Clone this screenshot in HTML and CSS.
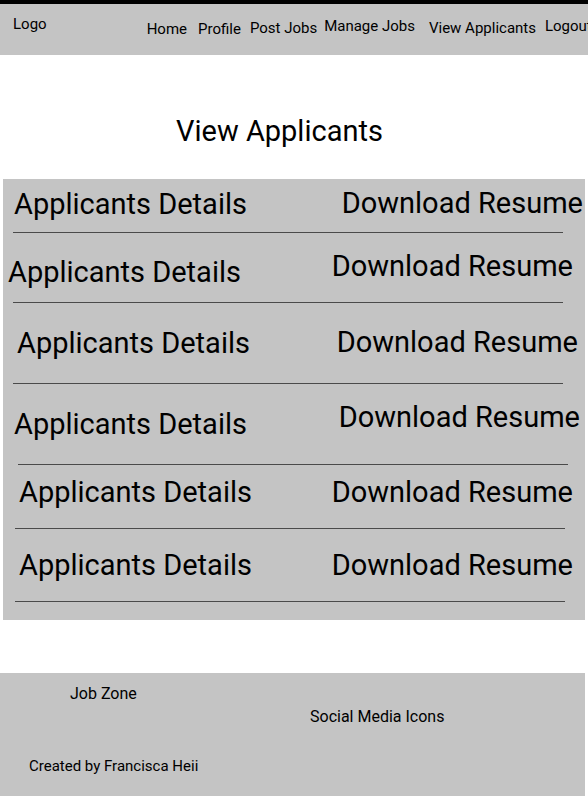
FILE: index.html
```html
<!DOCTYPE html>
<html>
<head>
<meta charset="utf-8">
<link rel="stylesheet" href="styles.css">
</head>
<body>
<header class="topbar">
  <div class="logo">Logo</div>
  <nav class="nav">
    <a class="nav-item n-home">Home</a>
    <a class="nav-item n-profile">Profile</a>
    <a class="nav-item n-post">Post Jobs</a>
    <a class="nav-item n-manage">Manage Jobs</a>
    <a class="nav-item n-view">View Applicants</a>
    <a class="nav-item n-logout">Logout</a>
  </nav>
</header>
<main>
  <h1 class="title">View Applicants</h1>
  <section class="panel">
    <div class="row r1"><span class="details">Applicants Details</span><span class="resume">Download Resume</span></div>
    <div class="line"></div>
    <div class="row r2"><span class="details">Applicants Details</span><span class="resume">Download Resume</span></div>
    <div class="line"></div>
    <div class="row r3"><span class="details">Applicants Details</span><span class="resume">Download Resume</span></div>
    <div class="line"></div>
    <div class="row r4"><span class="details">Applicants Details</span><span class="resume">Download Resume</span></div>
    <div class="line l4"></div>
    <div class="row r5"><span class="details">Applicants Details</span><span class="resume">Download Resume</span></div>
    <div class="line l5"></div>
    <div class="row r6"><span class="details">Applicants Details</span><span class="resume">Download Resume</span></div>
    <div class="line l5"></div>
  </section>
</main>
<footer class="footer">
  <div class="brand">Job Zone</div>
  <div class="social">Social Media Icons</div>
  <div class="credit">Created by Francisca Heii</div>
</footer>
</body>
</html>
```
FILE: styles.css
```css
html, body {
  margin: 0;
  padding: 0;
  background: #ffffff;
  font-family: Roboto, "Liberation Sans", sans-serif;
  color: #000;
  overflow: hidden;
  width: 588px;
}
.topbar {
  border-top: 4px solid #000;
  background: #c4c4c4;
  height: 51px;
  display: flex;
  align-items: flex-start;
  white-space: nowrap;
}
.logo {
  font-size: 15px;
  margin-left: 13px;
  margin-top: 11px;
}
.nav {
  display: flex;
  align-items: flex-start;
  margin-left: 100px;
  font-size: 15px;
}
.nav-item { display: block; }
.n-home { margin-top: 16px; }
.n-profile { margin-top: 16px; margin-left: 11px; }
.n-post { margin-top: 15px; margin-left: 9px; }
.n-manage { margin-top: 13px; margin-left: 7px; }
.n-view { margin-top: 15px; margin-left: 14px; }
.n-logout { margin-top: 13px; margin-left: 9px; }

.title {
  margin: 0;
  height: 124px;
  box-sizing: border-box;
  padding-top: 62px;
  padding-left: 176px;
  font-size: 29px;
  font-weight: 400;
  line-height: 1;
}
.panel {
  margin-left: 3px;
  width: 582px;
  background: #c4c4c4;
  padding-bottom: 18px;
}
.row {
  display: flex;
  justify-content: space-between;
  align-items: flex-start;
  font-size: 29px;
  line-height: 1;
  white-space: nowrap;
}
.line {
  height: 1px;
  background: #4a4a4a;
  margin-left: 10px;
  width: 550px;
}
.l4 { margin-left: 15px; }
.l5 { margin-left: 12px; }
.r1 { height: 53px; }
.r1 .details { margin: 11px 0 0 11px; }
.r1 .resume { margin: 10px 2px 0 0; }
.r2 { height: 69px; }
.r2 .details { margin: 25px 0 0 5px; }
.r2 .resume { margin: 19px 12px 0 0; }
.r3 { height: 80px; }
.r3 .details { margin: 26px 0 0 14px; }
.r3 .resume { margin: 25px 7px 0 0; }
.r4 { height: 80px; }
.r4 .details { margin: 26px 0 0 11px; }
.r4 .resume { margin: 19px 5px 0 0; }
.r5 { height: 63px; }
.r5 .details { margin: 13px 0 0 16px; }
.r5 .resume { margin: 13px 12px 0 0; }
.r6 { height: 72px; }
.r6 .details { margin: 22px 0 0 16px; }
.r6 .resume { margin: 22px 12px 0 0; }

.footer {
  margin-top: 53px;
  background: #c4c4c4;
  width: 585px;
  height: 123px;
  font-size: 15px;
  line-height: 1;
  display: flex;
  flex-direction: column;
  align-items: flex-start;
}
.brand { margin: 13px 0 0 70px; font-size: 16px; }
.social { margin: 7px 0 0 310px; font-size: 16px; }
.credit { margin: 34px 0 0 29px; }
```
